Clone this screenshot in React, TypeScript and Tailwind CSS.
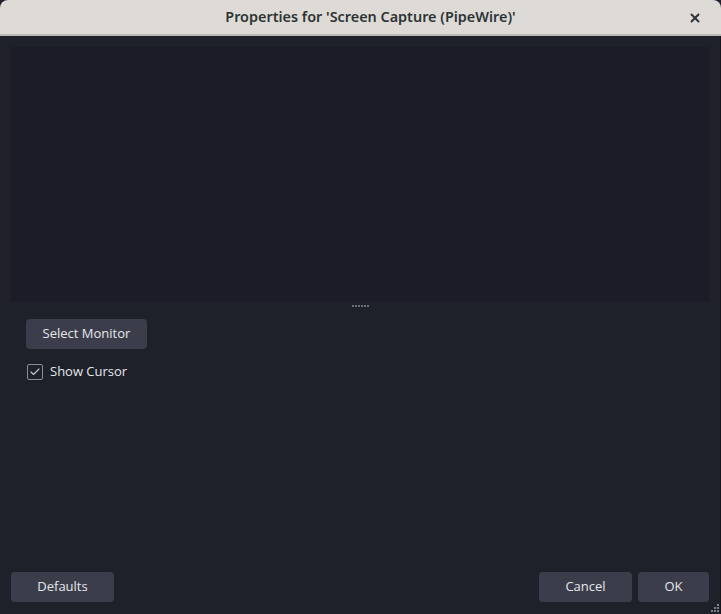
import { Check, X } from 'lucide-react'

function Btn({ label, className = '' }: { label: string, className?: string }) {
  return (
    <button className={`h-[30px] rounded-[4px] bg-[#3b3e4a] text-[13px] text-[#e6e7eb] ${className}`}>
      {label}
    </button>
  )
}

export default function App() {
  return (
    <div className="w-[721px] h-[614px] flex flex-col bg-[#1f212a] overflow-hidden" style={{ fontFamily: '"Open Sans", "Noto Sans", sans-serif' }}>
      {/* title bar */}
      <div className="relative h-[36px] shrink-0 bg-[#dedbd7] border-b-2 border-[#bdbab5] rounded-t-[8px] flex items-center justify-center pl-[20px]">
        <span className="text-[14.4px] font-semibold text-[#2e3436]" style={{ fontFamily: '"Noto Sans", sans-serif' }}>
          Properties for 'Screen Capture (PipeWire)'
        </span>
        <X size={14} strokeWidth={3.2} className="absolute right-[19px] top-[11px] text-[#2e3436]" />
      </div>

      <div className="flex-1 flex flex-col border-r border-[#15161c]">
        {/* preview */}
        <div className="mx-[11px] mt-[11px] h-[255px] bg-[#1b1c27]" />
        {/* splitter handle */}
        <div className="h-[6px] flex items-center justify-center gap-[1px] mt-[1px]">
          {[0, 1, 2, 3, 4, 5].map(i => (
            <span key={i} className="w-[2px] h-[2px] bg-[#6b6e78]" />
          ))}
        </div>

        <div className="pl-[26px] pt-[10px] flex flex-col items-start">
          <Btn label="Select Monitor" className="w-[121px]" />
          <label className="mt-[13px] flex items-center gap-[7px] text-[13px] text-[#e6e7eb]">
            <span className="ml-[1px] w-[16px] h-[16px] rounded-[2px] border border-[#8a8c94] flex items-center justify-center">
              <Check size={12} strokeWidth={2.2} className="text-[#c9cacf]" />
            </span>
            Show Cursor
          </label>
        </div>

        <div className="flex-1" />

        {/* footer */}
        <div className="relative flex items-center pl-[11px] pr-[11px] pb-[12px]">
          <Btn label="Defaults" className="w-[103px]" />
          <div className="flex-1" />
          <Btn label="Cancel" className="w-[93px]" />
          <Btn label="OK" className="w-[71px] ml-[6px]" />
          <svg className="absolute right-[1px] bottom-[1px]" width="10" height="10" viewBox="0 0 10 10">
            {[[8, 0], [8, 3], [8, 6], [5, 3], [5, 6], [2, 6]].map(([x, y], i) => (
              <rect key={i} x={x} y={y + 1} width="2" height="2" fill="#7d808a" />
            ))}
          </svg>
        </div>
      </div>
    </div>
  )
}
